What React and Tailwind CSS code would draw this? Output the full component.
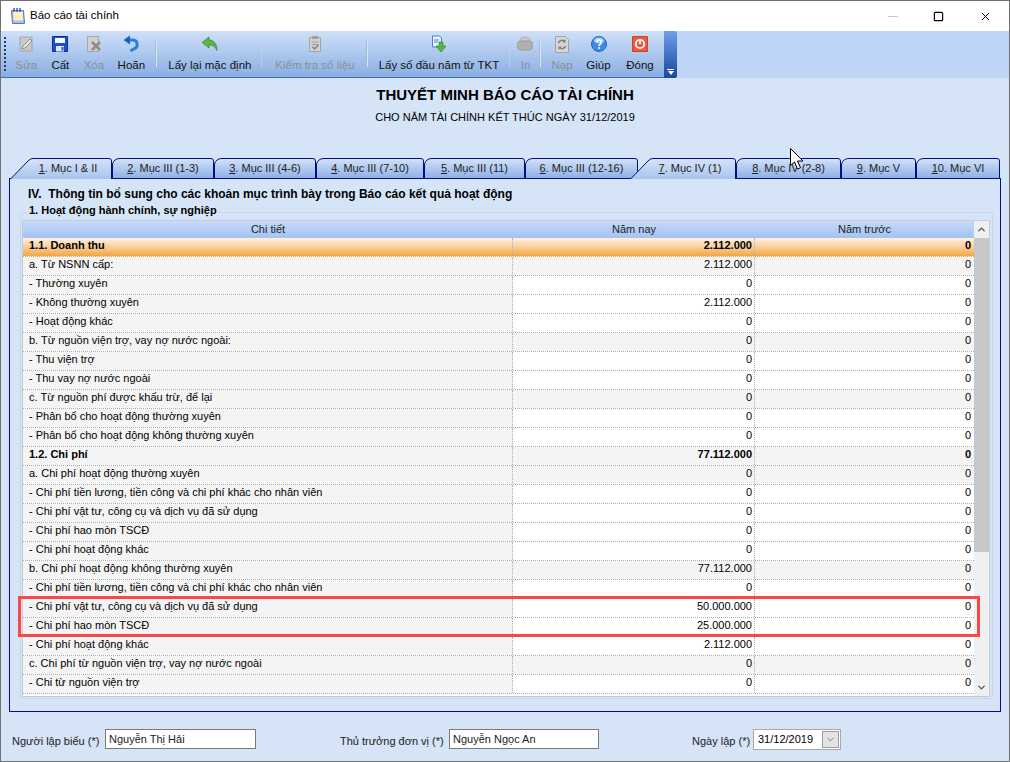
import React from 'react';
import { ChevronUp, ChevronDown, X, Square } from 'lucide-react';

// toolbar icons
const IconEdit = () => (
  <svg width="18" height="18" viewBox="0 0 18 18">
    <path d="M3 2h12v14H3z" fill="#c9c9c9" stroke="#a6a6a6" />
    <path d="M6 11l7-7 2 2-7 7-3 1z" fill="#e6e6e6" stroke="#8e8e8e" />
  </svg>
);
const IconSave = () => (
  <svg width="16" height="16" viewBox="0 0 16 16">
    <path d="M.5.5h15v15H.5z" fill="#1f4fc8" stroke="#0e2f96" />
    <path d="M3 2h10v5H3z" fill="#f2f6ff" />
    <path d="M4 10h8v5.500H4z" fill="#dfe6f3" />
    <path d="M9.500 11h2v3.500h-2z" fill="#1f4fc8" />
  </svg>
);
const IconDelete = () => (
  <svg width="18" height="18" viewBox="0 0 18 18">
    <path d="M2.500 1.500h11v15h-11z" fill="#cfcfcf" stroke="#a6a6a6" />
    <path d="M7 7l8 8M15 7l-8 8" stroke="#8c8c8c" strokeWidth="2.500" />
  </svg>
);
const IconUndo = () => (
  <svg width="16" height="18" viewBox="0 0 16 18">
    <path d="M5 5h4.500a4.500 4.500 0 0 1 1.500 8.800L7.500 16" fill="none" stroke="#2f7fd6" strokeWidth="3" />
    <path d="M7 .5L.5 5 7 9.500z" fill="#1e62b8" />
  </svg>
);
const IconBackGreen = () => (
  <svg width="18" height="16" viewBox="0 0 18 16">
    <path d="M8 1L1 6.500 8 12V9c4 0 6 1.500 8 5.500C16 8 13 4 8 4z" fill="#5cb54a" stroke="#3c8e31" strokeWidth=".8" />
  </svg>
);
const IconCheckDoc = () => (
  <svg width="16" height="18" viewBox="0 0 16 18">
    <path d="M2.500 2.500h11v14h-11z" fill="#d2d2d2" stroke="#a3a3a3" />
    <path d="M5 1h6v3H5z" fill="#9f9f9f" />
    <path d="M4.500 7h7M4.500 9.500h7" stroke="#9a9a9a" />
    <path d="M5.500 11.500l2 2.500 4-4" fill="none" stroke="#808080" strokeWidth="1.500" />
  </svg>
);
const IconImport = () => (
  <svg width="16" height="18" viewBox="0 0 16 18">
    <path d="M1.500 1h7l2 2v9h-9z" fill="#eef5ff" stroke="#3f86d8" />
    <path d="M3 5h5M3 7h4" stroke="#3f86d8" />
    <path d="M8 7h4v4h3l-5 6-5-6h3z" fill="#52b93c" stroke="#2d8a25" strokeWidth=".7" />
  </svg>
);
const IconPrint = () => (
  <svg width="16" height="16" viewBox="0 0 16 16">
    <ellipse cx="8" cy="4" rx="5" ry="3" fill="#c8c8c8" stroke="#ababab" />
    <path d="M.500 8q0-3 3-3h9q3 0 3 3v2q0 4-3 4h-9q-3 0-3-4z" fill="#b0b0b0" stroke="#9c9c9c" />
  </svg>
);
const IconReload = () => (
  <svg width="14" height="17" viewBox="0 0 14 17">
    <path d="M.5.5h10l3 3v13H.5z" fill="#d6d6d6" stroke="#a3a3a3" />
    <path d="M3.500 7a3.500 3.500 0 0 1 6-1.500M10.500 10a3.500 3.500 0 0 1-6 1.500" fill="none" stroke="#7e7e7e" strokeWidth="1.500" />
    <path d="M10.500 3v3.500H7zM3.500 14v-3.500H7z" fill="#7e7e7e" />
  </svg>
);
const IconHelp = () => (
  <svg width="16" height="16" viewBox="0 0 16 16">
    <circle cx="8" cy="8" r="7.500" fill="#3d8ce8" stroke="#2367bd" />
    <ellipse cx="8" cy="4.500" rx="5" ry="3" fill="#a9d0fa" />
    <path d="M5.700 6.200a2.300 2.300 0 1 1 3.600 1.900c-.9.600-1.300 1-1.300 2" fill="none" stroke="#fff" strokeWidth="1.600" />
    <circle cx="8" cy="12" r="1" fill="#fff" />
  </svg>
);
const IconClose = () => (
  <svg width="16" height="16" viewBox="0 0 16 16">
    <path d="M.5.5h15v15H.5z" fill="#ee5a3d" stroke="#d0432a" />
    <circle cx="8" cy="8" r="4.200" fill="none" stroke="#fff" strokeWidth="1.800" />
    <path d="M8 3.500v4.500" stroke="#fff" strokeWidth="1.800" />
  </svg>
);

const tools = [
  { label: 'Sửa', w: 'w-[34px]', icon: <IconEdit />, off: true },
  { label: 'Cất', w: 'w-[34px]', icon: <IconSave /> },
  { label: 'Xóa', w: 'w-[33px]', icon: <IconDelete />, off: true },
  { label: 'Hoãn', w: 'w-[42px]', icon: <IconUndo /> },
  { sep: true, m: 'ml-[3px] mr-[2px]' },
  { label: 'Lấy lại mặc định', w: 'w-[102px]', icon: <IconBackGreen /> },
  { sep: true, m: 'mr-[1px]' },
  { label: 'Kiểm tra số liệu', w: 'w-[103px]', icon: <IconCheckDoc />, off: true },
  { sep: true, m: 'mr-[1px]' },
  { label: 'Lấy số đầu năm từ TKT', w: 'w-[140px]', icon: <IconImport /> },
  { sep: true, m: 'mr-[1px]' },
  { label: 'In', w: 'w-[28px]', icon: <IconPrint />, off: true },
  { sep: true, m: 'mr-[2px]' },
  { label: 'Nạp', w: 'w-[38px]', icon: <IconReload />, off: true },
  { label: 'Giúp', w: 'w-[35px]', icon: <IconHelp /> },
  { label: 'Đóng', w: 'w-[48px]', icon: <IconClose /> },
];

const tabs = [
  { num: '1', rest: '. Mục I & II', w: 102, cls: 'w-[102px]', active: true },
  { num: '2', rest: '. Mục III (1-3)', w: 102, cls: 'w-[102px]' },
  { num: '3', rest: '. Mục III (4-6)', w: 102, cls: 'w-[102px]' },
  { num: '4', rest: '. Mục III (7-10)', w: 108, cls: 'w-[108px]' },
  { num: '5', rest: '. Mục III (11)', w: 101, cls: 'w-[101px]' },
  { num: '6', rest: '. Mục III (12-16)', w: 113, cls: 'w-[113px]' },
  { num: '7', rest: '. Mục IV (1)', w: 106, cls: 'w-[106px] -ml-[8px]', active: true },
  { num: '8', rest: '. Mục IV (2-8)', w: 105, cls: 'w-[105px]' },
  { num: '9', rest: '. Mục V', w: 75, cls: 'w-[75px]' },
  { num: '1', rest: '0. Mục VI', w: 84, cls: 'w-[84px]' },
];

// white = editable cell in the "Năm nay" column
const rows = [
  { name: '1.1. Doanh thu', a: '2.112.000', head: true, bold: true },
  { name: 'a. Từ NSNN cấp:', a: '2.112.000' },
  { name: '- Thường xuyên', a: '0', white: true },
  { name: '- Không thường xuyên', a: '2.112.000', white: true },
  { name: '- Hoạt động khác', a: '0', white: true },
  { name: 'b. Từ nguồn viện trợ, vay nợ nước ngoài:', a: '0' },
  { name: '- Thu viện trợ', a: '0', white: true },
  { name: '- Thu vay nợ nước ngoài', a: '0', white: true },
  { name: 'c. Từ nguồn phí được khấu trừ, để lại', a: '0' },
  { name: '- Phân bổ cho hoạt động thường xuyên', a: '0', white: true },
  { name: '- Phân bổ cho hoạt động không thường xuyên', a: '0', white: true },
  { name: '1.2. Chi phí', a: '77.112.000', bold: true },
  { name: 'a. Chi phí hoạt động thường xuyên', a: '0' },
  { name: '- Chi phí tiền lương, tiền công và chi phí khác cho nhân viên', a: '0', white: true },
  { name: '- Chi phí vật tư, công cụ và dịch vụ đã sử dụng', a: '0', white: true },
  { name: '- Chi phí hao mòn TSCĐ', a: '0', white: true },
  { name: '- Chi phí hoạt động khác', a: '0', white: true },
  { name: 'b. Chi phí hoạt động không thường xuyên', a: '77.112.000' },
  { name: '- Chi phí tiền lương, tiền công và chi phí khác cho nhân viên', a: '0', white: true },
  { name: '- Chi phí vật tư, công cụ và dịch vụ đã sử dụng', a: '50.000.000', white: true },
  { name: '- Chi phí hao mòn TSCĐ', a: '25.000.000', white: true },
  { name: '- Chi phí hoạt động khác', a: '2.112.000', white: true },
  { name: 'c. Chi phí từ nguồn viện trợ, vay nợ nước ngoài', a: '0' },
  { name: '- Chi từ nguồn viện trợ', a: '0', white: true },
];

function TabShape({ w, active }) {
  const id = active ? 'tabOn' : 'tabOff';
  const h = active ? 21 : 20;
  const d = active
    ? `M.5 ${h} L18 3 Q20 .5 23 .5 H${w - 3} Q${w - .5} .5 ${w - .5} 3 V${h}`
    : `M.5 ${h} V6 Q2 .5 8 .5 H${w - 3} Q${w - .5} .5 ${w - .5} 3 V${h}`;
  return (
    <svg className="absolute left-0 top-0" width={w} height={h}>
      <defs>
        <linearGradient id={id} x1="0" y1="0" x2="0" y2="1">
          <stop offset="0" stopColor={active ? '#d6e4f8' : '#d3e2f8'} />
          <stop offset="1" stopColor={active ? '#a9c4ee' : '#8fb0e6'} />
        </linearGradient>
      </defs>
      <path d={d} fill={`url(#${id})`} stroke="none" />
      <path d={d} fill="none" stroke="#00107e" />
    </svg>
  );
}

export default function App() {
  return (
    <div className="w-[1010px] h-[762px] overflow-hidden flex flex-col border border-[#707070] bg-[#d6e4f7] text-[11px] text-[#111] relative font-['Liberation_Sans',Arial,sans-serif]">
      {/* title bar */}
      <div className="h-[30px] bg-white flex items-center shrink-0">
        <svg className="ml-[9px]" width="16" height="18" viewBox="0 0 16 18">
          <path d="M1.500 3.500h12l1 13h-12z" fill="#a9c0f0" stroke="#5f70bc" />
          <path d="M3 4.500h9.500l.7 9H3.700z" fill="#fdf0b8" />
          <path d="M4 1v4M7 1v4M10 1v4" stroke="#3f58c0" strokeWidth="1.500" />
        </svg>
        <span className="ml-[4px] text-[11.5px] text-black">Báo cáo tài chính</span>
        <div className="ml-auto flex items-center">
          <div className="w-[46px] flex justify-center"><span className="w-[10px] h-px bg-[#c8c8c8]"></span></div>
          <div className="w-[45px] flex justify-center"><Square size={11} strokeWidth={1.2} absoluteStrokeWidth className="text-black" /></div>
          <div className="w-[48px] flex justify-center"><X size={13} strokeWidth={1} absoluteStrokeWidth className="text-black" /></div>
        </div>
      </div>

      {/* toolbar */}
      <div className="h-[47px] shrink-0 flex bg-[#bed5f7]">
        <div className="flex items-stretch w-[663px] rounded-tl-[2px] border-b border-[#3d6cb5] bg-gradient-to-b from-[#cfe0f8] to-[#8aaee3] text-[11.5px]">
          <div className="w-[10px] flex flex-col gap-[2px] items-start pt-[6px] pl-[3px]">
            {[0, 1, 2, 3, 4, 5, 6, 7, 8].map((i) => (
              <span key={i} className="w-[2px] h-[2px] bg-[#1f3f7a]"></span>
            ))}
          </div>
          {tools.map((t, i) =>
            t.sep ? (
              <div key={i} className={`w-[2px] my-[10px] bg-gradient-to-r from-[#7f9fd0] to-white ${t.m}`}></div>
            ) : (
              <div key={i} className={`${t.w} shrink-0 flex flex-col items-center ${t.off ? 'text-[#8a9099]' : 'text-[#111]'}`}>
                <div className="h-[18px] mt-[4px] flex items-center justify-center">{t.icon}</div>
                <span className="mt-[5px] leading-[14px] whitespace-nowrap">{t.label}</span>
              </div>
            )
          )}
        </div>
        <div className="w-[13px] rounded-r-[2px] bg-gradient-to-b from-[#6f9eea] to-[#1c479c] flex flex-col justify-end items-center pb-[3px]">
          <span className="w-[7px] h-px bg-white mb-[1px]"></span>
          <span className="w-0 h-0 border-x-[3px] border-t-[4px] border-x-transparent border-t-white"></span>
        </div>
      </div>

      {/* heading */}
      <div className="text-center h-[18px] mt-[8px] leading-[18px] text-[15px] font-bold text-black shrink-0">THUYẾT MINH BÁO CÁO TÀI CHÍNH</div>
      <div className="text-center h-[16px] mt-[5px] leading-[16px] text-[11px] text-black shrink-0">CHO NĂM TÀI CHÍNH KẾT THÚC NGÀY 31/12/2019</div>

      {/* tabs */}
      <div className="flex items-start mt-[33px] ml-[9px] h-[20px] shrink-0 relative">
        {tabs.map((t, i) => (
          <div key={i} className={`${t.cls} ${t.active ? 'h-[21px] z-20' : 'h-[20px] z-0'} relative shrink-0`}>
            <TabShape w={t.w} active={t.active} />
            <div className={`relative whitespace-nowrap text-center leading-[20px] text-[#222] ${t.active ? 'pl-[14px]' : ''}`}>
              <span className="underline">{t.num}</span>{t.rest}
            </div>
          </div>
        ))}
      </div>

      {/* panel */}
      <div className="relative z-10 ml-[8px] w-[992px] h-[534px] border border-[#00107e] shrink-0 pl-[10px] pt-[8px]">
        <div className="font-bold text-[12px] leading-[15px] text-black pl-[8px]">IV.&nbsp; Thông tin bổ sung cho các khoản mục trình bày trong Báo cáo kết quả hoạt động</div>

        <div className="mt-[10px] w-[973px] border border-[#c9d6e8] rounded-[3px] pl-[1px] pb-[1px]">
          <div className="-mt-[10px] ml-[6px] w-fit px-[1px] bg-[#d6e4f7] font-bold leading-[15px] text-black">1. Hoạt động hành chính, sự nghiệp</div>

          <div className="relative mt-[2px] w-[968px] h-[477px] border border-[#c3ccd8] flex bg-white text-black">
            <div className="w-[951px] shrink-0">
              <div className="flex h-[17px] leading-[17px] text-center bg-gradient-to-b from-[#c6daf8] to-[#a3c2f3] text-[#222]">
                <div className="w-[490px]">Chi tiết</div>
                <div className="w-[242px]">Năm nay</div>
                <div className="w-[219px]">Năm trước</div>
              </div>
              {rows.map((r, i) => (
                <div
                  key={i}
                  className={`flex h-[19px] leading-[15px] border-b border-dotted ${r.head ? 'bg-gradient-to-b from-[#fdf3e4] to-[#f2a63c] border-[#e5ab5b]' : 'border-[#aeaeae]'} ${r.bold ? 'font-bold' : ''}`}
                >
                  <div className={`w-[490px] shrink-0 pl-[6px] border-r border-dotted border-[#aeaeae] whitespace-nowrap overflow-hidden ${r.head ? '' : 'bg-[#f4f4f4]'}`}>{r.name}</div>
                  <div className={`w-[242px] shrink-0 pr-[2px] text-right border-r border-dotted border-[#aeaeae] ${r.head ? '' : r.white ? 'bg-white' : 'bg-[#f4f4f4]'}`}>{r.a}</div>
                  <div className={`w-[219px] shrink-0 pr-[3px] text-right ${r.head ? '' : r.white ? 'bg-white' : 'bg-[#f4f4f4]'}`}>0</div>
                </div>
              ))}
            </div>
            <div className="w-[15px] shrink-0 bg-[#f0f0f0] flex flex-col">
              <div className="h-[17px] flex items-center justify-center"><ChevronUp size={11} strokeWidth={3} className="text-[#555]" /></div>
              <div className="h-[314px] bg-[#c8c8c8]"></div>
              <div className="mt-auto h-[17px] flex items-center justify-center"><ChevronDown size={11} strokeWidth={3} className="text-[#555]" /></div>
            </div>

            {/* red highlight annotation */}
            <div className="absolute left-[-5px] top-[375px] w-[962px] h-[41px] border-[3px] border-[#fb4747] pointer-events-none"></div>
          </div>
        </div>
      </div>

      {/* footer */}
      <div className="flex items-start h-[20px] mt-[17px] shrink-0 text-[#222]">
        <span className="ml-[11px] w-[93px] mt-[5px] leading-[15px] whitespace-nowrap">Người lập biểu (*)</span>
        <div className="w-[151px] h-[20px] border border-[#7a7a7a] bg-white pl-[3px] leading-[18px]">Nguyễn Thị Hải</div>
        <span className="ml-[84px] w-[109px] mt-[5px] leading-[15px] whitespace-nowrap">Thủ trưởng đơn vị (*)</span>
        <div className="w-[150px] h-[20px] border border-[#7a7a7a] bg-white pl-[3px] leading-[18px]">Nguyễn Ngọc An</div>
        <span className="ml-[93px] w-[61px] mt-[5px] leading-[15px] whitespace-nowrap">Ngày lập (*)</span>
        <div className="w-[88px] h-[21px] border border-[#a9a9a9] bg-white flex items-start pl-[4px] leading-[18px] text-black">
          <span>31/12/2019</span>
          <div className="ml-auto mr-[1px] mt-[1px] w-[17px] h-[17px] border border-[#9c9c9c] bg-[#e3e3e3] flex items-center justify-center">
            <ChevronDown size={11} strokeWidth={1.5} className="text-[#555]" />
          </div>
        </div>
      </div>

      {/* mouse cursor in the capture */}
      <svg className="absolute left-[789px] top-[147px] z-30" width="16" height="24" viewBox="0 0 16 24">
        <path d="M.5.5v17l4-3.500 3 7 3-1.300-3-6.700h5.500z" fill="#fff" stroke="#000" />
      </svg>
    </div>
  );
}
